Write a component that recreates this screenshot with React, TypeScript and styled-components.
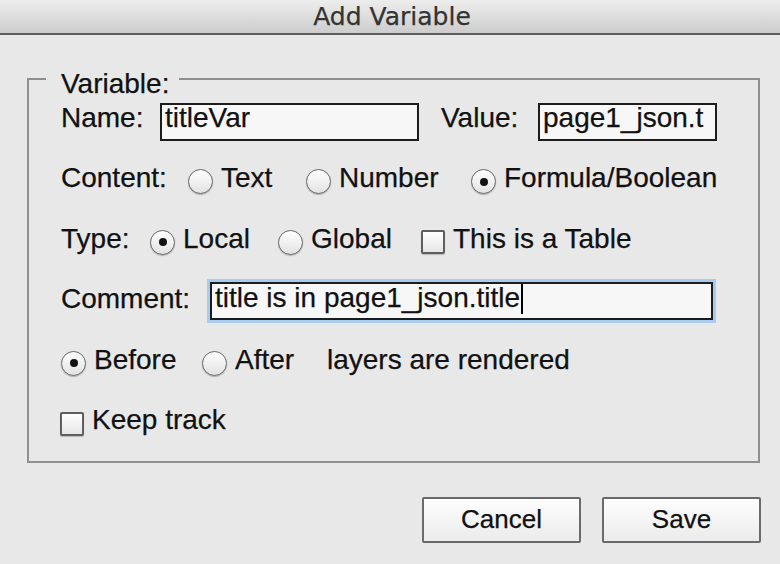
import React from 'react';
import styled, { createGlobalStyle } from 'styled-components';

const GlobalStyle = createGlobalStyle`
  html, body { margin: 0; padding: 0; background: #e8e8e8; }
  body {
    width: 780px;
    height: 564px;
    overflow: hidden;
    font-family: "Liberation Sans", Arial, sans-serif;
    color: #111;
  }
`;

const Window = styled.div`
  width: 780px;
  height: 564px;
  background: #e8e8e8;
  display: flex;
  flex-direction: column;
  -webkit-text-stroke: 0.25px currentColor;
`;

const TitleBar = styled.div`
  height: 33px;
  border-bottom: 2px solid #5c5c5c;
  background: linear-gradient(#ededed, #cdcdcd);
  display: flex;
  align-items: center;
  justify-content: center;
  padding-left: 4px;
  font-family: "DejaVu Sans", sans-serif;
  font-size: 25px;
  color: #333;
`;

const Body = styled.div`
  padding: 23px 0 0 27px;
  display: flex;
  flex-direction: column;
`;

const Group = styled.fieldset`
  box-sizing: border-box;
  width: 733px;
  margin: 0;
  border: 2px solid #8f8f8f;
  padding: 0 0 20.5px 17px;
  min-inline-size: 0;
`;

const Legend = styled.legend`
  padding: 10px 10px 0 15px;
  font-size: 28px;
  line-height: 32px;
`;

const Rows = styled.div`
  display: flex;
  flex-direction: column;
  gap: 20.6px;
  margin-top: -2.5px;
  padding-left: 15px;
`;

const Row = styled.div`
  display: flex;
  align-items: center;
  height: 40px;
  font-size: 28px;
`;

const Label = styled.span<{ $w?: number; $ml?: number }>`
  flex-shrink: 0;
  width: ${(p) => (p.$w ? `${p.$w}px` : 'auto')};
  margin-left: ${(p) => p.$ml ?? 0}px;
  line-height: 32px;
  white-space: nowrap;
`;

const TextBox = styled.div<{ $w: number; $shift: number; $focus?: boolean }>`
  box-sizing: border-box;
  flex-shrink: 0;
  width: ${(p) => p.$w}px;
  height: 38px;
  margin-top: ${(p) => p.$shift}px;
  border: 2px solid #1c1c1c;
  background: #f7f7f7;
  padding: 0 3px;
  line-height: 26px;
  white-space: nowrap;
  overflow: hidden;
  box-shadow: ${(p) => (p.$focus ? '0 0 0 3px #a9cbef' : 'none')};
`;

const Caret = styled.span`
  display: inline-block;
  width: 2px;
  height: 30px;
  background: #000;
  vertical-align: -7px;
  margin-left: 1px;
`;

const Option = styled.span<{ $w?: number }>`
  flex-shrink: 0;
  display: flex;
  align-items: center;
  width: ${(p) => (p.$w ? `${p.$w}px` : 'auto')};
  line-height: 32px;
  white-space: nowrap;
`;

const Radio = styled.span<{ $on?: boolean }>`
  box-sizing: border-box;
  flex-shrink: 0;
  position: relative;
  width: 25px;
  height: 25px;
  margin: 7px 8px 0 0;
  border-radius: 50%;
  border: 1.5px solid #666;
  background: linear-gradient(#ffffff, #e2e2e2);
  box-shadow: 0 1px 1px rgba(0, 0, 0, 0.25);
  &::after {
    content: '';
    display: ${(p) => (p.$on ? 'block' : 'none')};
    position: absolute;
    left: 50%;
    top: 50%;
    width: 8px;
    height: 8px;
    margin: -4px 0 0 -4px;
    border-radius: 50%;
    background: #111;
  }
`;

const Check = styled.span<{ $ml?: number }>`
  box-sizing: border-box;
  flex-shrink: 0;
  width: 24px;
  height: 24px;
  margin: 7px 8px 0 ${(p) => p.$ml ?? 0}px;
  border-radius: 2px;
  border: 2px solid #5e5e5e;
  background: linear-gradient(#ffffff, #e6e6e6);
  box-shadow: 0 1px 1px rgba(0, 0, 0, 0.2);
`;

const ButtonBar = styled.div`
  display: flex;
  justify-content: flex-end;
  gap: 21px;
  margin-top: 34px;
  padding-right: 19px;
`;

const Button = styled.button`
  box-sizing: border-box;
  width: 159px;
  height: 46px;
  border: 2px solid #6a6a6a;
  border-radius: 2px;
  background: linear-gradient(#fefefe, #ebebeb);
  font-family: "Liberation Sans", Arial, sans-serif;
  font-size: 26px;
  color: #111;
  padding: 0;
  -webkit-text-stroke: 0.25px currentColor;
`;

export default function App() {
  return (
    <Window>
      <GlobalStyle />
      <TitleBar>Add Variable</TitleBar>
      <Body>
        <Group>
          <Legend>Variable:</Legend>
          <Rows>
            <Row>
              <Label $w={99}>Name:</Label>
              <TextBox $w={259} $shift={9}>titleVar</TextBox>
              <Label $w={97} $ml={22}>Value:</Label>
              <TextBox $w={179} $shift={9}>page1_json.t</TextBox>
            </Row>
            <Row>
              <Label $w={127}>Content:</Label>
              <Option $w={118}>
                <Radio />
                Text
              </Option>
              <Option $w={165}>
                <Radio />
                Number
              </Option>
              <Option>
                <Radio $on />
                Formula/Boolean
              </Option>
            </Row>
            <Row>
              <Label $w={89}>Type:</Label>
              <Option $w={128}>
                <Radio $on />
                Local
              </Option>
              <Option $w={143}>
                <Radio />
                Global
              </Option>
              <Option>
                <Check />
                This is a Table
              </Option>
            </Row>
            <Row>
              <Label $w={149}>Comment:</Label>
              <TextBox $w={503} $shift={4} $focus>
                title is in page1_json.title
                <Caret />
              </TextBox>
            </Row>
            <Row>
              <Option $w={141}>
                <Radio $on />
                Before
              </Option>
              <Option $w={125}>
                <Radio />
                After
              </Option>
              <Label>layers are rendered</Label>
            </Row>
            <Row>
              <Option>
                <Check $ml={-1} />
                Keep track
              </Option>
            </Row>
          </Rows>
        </Group>
        <ButtonBar>
          <Button>Cancel</Button>
          <Button>Save</Button>
        </ButtonBar>
      </Body>
    </Window>
  );
}
